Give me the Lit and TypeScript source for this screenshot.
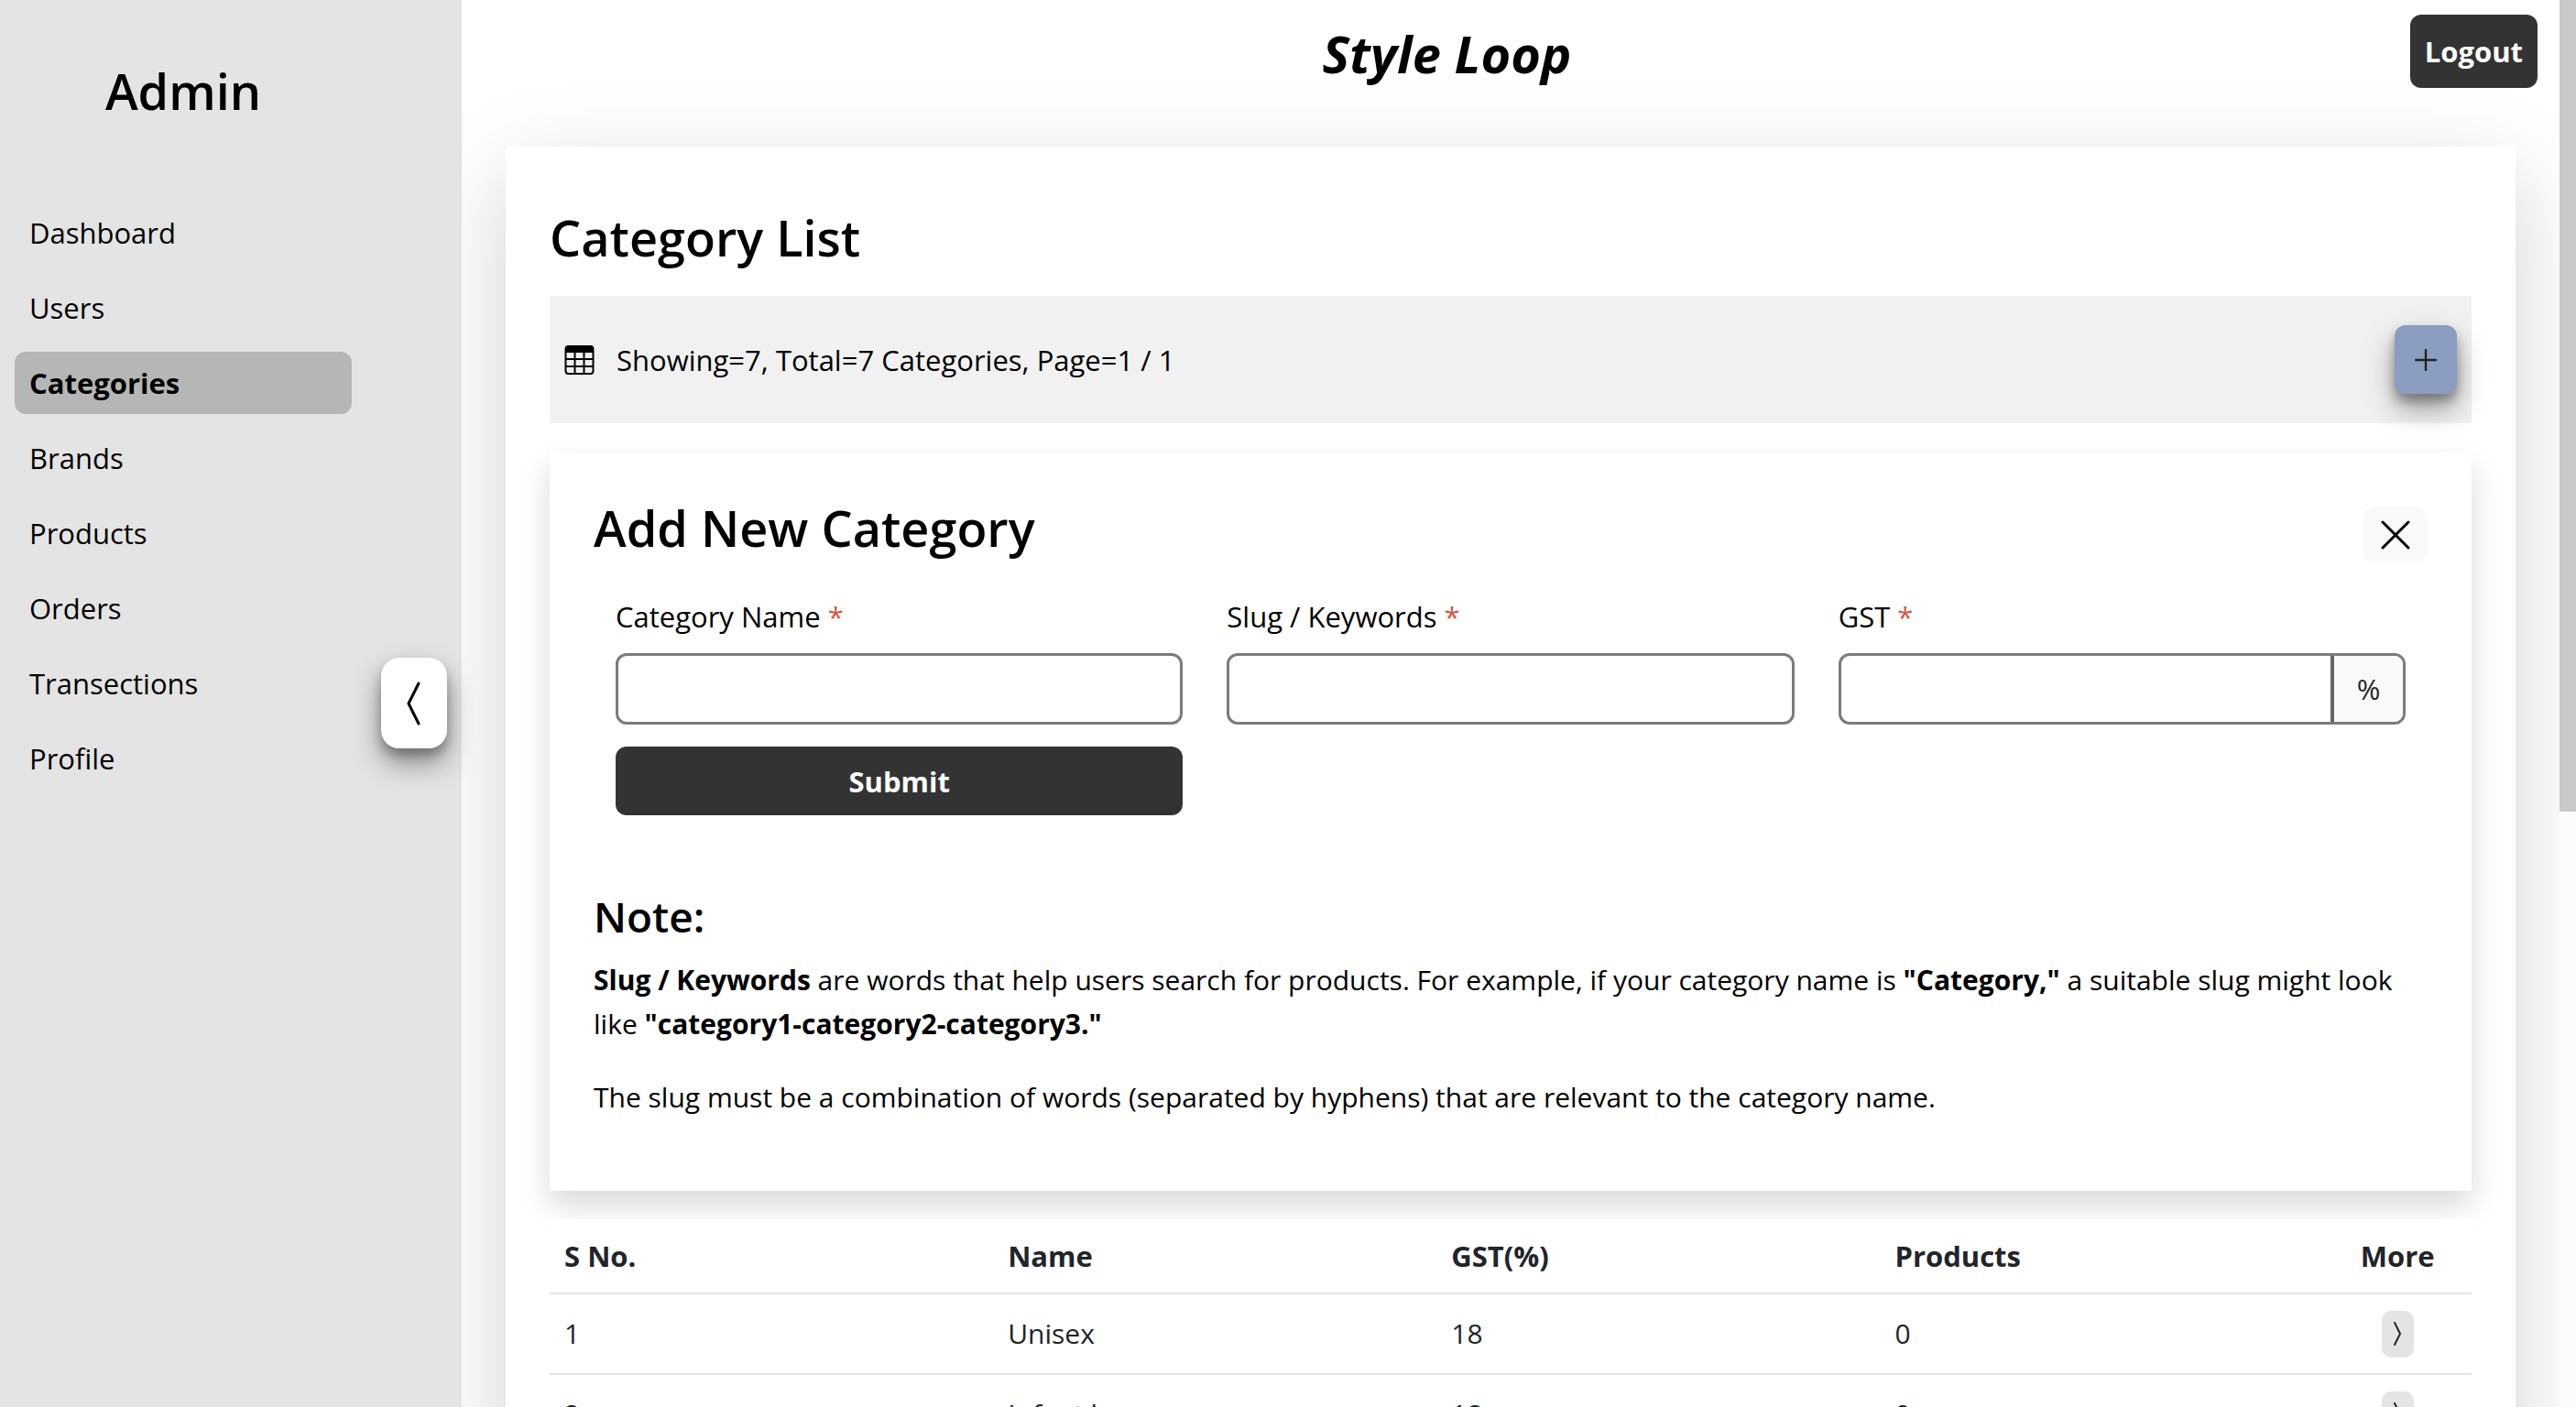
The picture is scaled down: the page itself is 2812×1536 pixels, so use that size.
import { LitElement, html, css, svg } from "lit";
import { customElement, state } from "lit/decorators.js";
import { classMap } from "lit/directives/class-map.js";

interface Category {
  id: number;
  name: string;
  gst: number;
  products: number;
}

const NAV = ["Dashboard", "Users", "Categories", "Brands", "Products", "Orders", "Transections", "Profile"];

const CATEGORIES: Category[] = [
  { id: 1, name: "Unisex", gst: 18, products: 0 },
  { id: 2, name: "Infant boys", gst: 18, products: 0 },
];

const tableIcon = svg`<path fill="currentColor" fill-rule="evenodd" d="M2 0a2 2 0 0 0-2 2v12a2 2 0 0 0 2 2h12a2 2 0 0 0 2-2V2a2 2 0 0 0-2-2zM15 4v3h-4V4zM15 8v3h-4V8zM15 12v2a1 1 0 0 1-1 1h-3v-3zM10 15H6v-3h4zM5 15H2a1 1 0 0 1-1-1v-2h4zM1 11V8h4v3zM1 7V4h4v3zM6 4h4v3H6zM10 8v3H6V8z"/>`;

@customElement("app-root")
export class AppRoot extends LitElement {
  @state() private current = "Categories";

  static styles = css`
    :host {
      display: block;
      font-family: "Segoe UI", "Open Sans", "Noto Sans", sans-serif;
      font-size: 31px;
      line-height: 48px;
      color: #000;
      background: #fff;
    }
    * { box-sizing: border-box; }
    h1, h2, h3, p { margin: 0; }
    button, input { font: inherit; color: inherit; margin: 0; border: 0; padding: 0; }
    button { cursor: pointer; display: flex; align-items: center; justify-content: center; }
    svg { display: block; }
    .shell { display: flex; height: 100vh; overflow: hidden; }
    .sidebar { flex: none; width: 504px; background: #e4e4e4; position: relative; z-index: 1; }
    .brand { width: 400px; padding-top: 65px; text-align: center; }
    .heading { font-size: 54px; line-height: 68px; font-weight: 600; }
    .nav { display: flex; flex-direction: column; gap: 14px; width: 400px; padding: 87px 16px 0; }
    .nav a { display: block; height: 68px; line-height: 68px; padding: 0 16px; border-radius: 12px; color: #000; text-decoration: none; }
    .nav a.active { background: #b5b7b6; font-weight: 700; }
    .toggle { position: absolute; right: 16px; top: 718px; width: 72px; height: 99px; border-radius: 20px; background: #fff; box-shadow: 0 16px 32px rgba(0, 0, 0, 0.4), 0 8px 12px rgba(0, 0, 0, 0.25); }
    .main { flex: 1; min-width: 0; overflow: hidden; }
    .topbar { display: flex; align-items: flex-start; padding: 16px 24px 0; height: 160px; }
    .logo { flex: 1; text-align: center; font-size: 56px; line-height: 68px; font-weight: 700; font-style: italic; padding-top: 8px; }
    .dark { background: #333; color: #fff; font-weight: 700; border-radius: 12px; }
    .logout { height: 80px; padding: 0 16px; }
    .page { margin: 0 48px; padding: 65px 48px 48px; background: #fff; box-shadow: 0 32px 96px rgba(0, 0, 0, 0.175); min-height: 100vh; }
    .summary { display: flex; align-items: center; gap: 24px; height: 139px; margin-top: 30px; padding: 0 16px; background: #f1f1f1; }
    .add { margin-left: auto; width: 68px; height: 75px; border-radius: 12px; background: #8b9dc0; color: #222; box-shadow: 0 16px 32px rgba(0, 0, 0, 0.35), 0 8px 12px rgba(0, 0, 0, 0.3); }
    .panel { margin-top: 32px; padding: 48px 48px 78px; background: #fff; box-shadow: 0 16px 32px rgba(0, 0, 0, 0.15); }
    .panel-head { display: flex; justify-content: space-between; align-items: flex-start; }
    .close { width: 71px; height: 60px; margin-top: 12px; border-radius: 12px; background: #f9f9f9; }
    .fields { display: grid; grid-template-columns: repeat(3, 1fr); column-gap: 48px; row-gap: 24px; padding: 35px 24px 0; }
    .field { display: flex; flex-direction: column; gap: 16px; }
    .req { color: #d6553f; }
    .box { display: flex; height: 78px; border: 3px solid #7b7b7b; border-radius: 12px; background: #fff; overflow: hidden; }
    .box input { flex: 1; min-width: 0; background: transparent; padding: 0 20px; outline: none; }
    .unit { width: 79px; border-left: 4px solid #666; background: #f9f9f9; color: #212529; display: flex; align-items: center; justify-content: center; }
    .submit { height: 75px; }
    .note { font-size: 46px; line-height: 56px; font-weight: 600; margin: 82px 0 18px; }
    .text { font-size: 30px; }
    .gap { margin-top: 32px; }
    .cats { width: 100%; margin-top: 31px; border-collapse: collapse; table-layout: fixed; background: #fff; position: relative; color: #212529; }
    .cats th, .cats td { text-align: left; padding: 0 16px; height: 88px; border-bottom: 2px solid #e3e4e5; }
    .cats td { font-size: 30px; }
    .cats th { height: 81px; font-weight: 700; }
    .cats .wide { width: 23.077%; }
    .cats .more { text-align: center; }
    .open { width: 35px; height: 51px; border-radius: 10px; background: #e4e4e4; margin: 0 auto; }
    .scroll { flex: none; width: 18px; background: #fcfcfc; position: relative; z-index: 1; }
    .thumb { height: 57.7%; background: #c9c9c9; }
  `;

  private field(id: string, label: string, unit = "") {
    return html`<div class="field">
      <label for=${id}>${label} <span class="req">*</span></label>
      <div class="box">
        <input id=${id} type="text" />${unit ? html`<span class="unit">${unit}</span>` : ""}
      </div>
    </div>`;
  }

  render() {
    return html`<div class="shell">
      <aside class="sidebar">
        <h2 class="brand heading">Admin</h2>
        <nav class="nav">
          ${NAV.map((n) => html`<a
            href="#${n.toLowerCase()}"
            class=${classMap({ active: n === this.current })}
            @click=${() => (this.current = n)}>${n}</a>`)}
        </nav>
        <button class="toggle" aria-label="Collapse menu">
          <svg width="20" height="50" viewBox="0 0 20 50"><path d="M15 3 4 25l11 22" fill="none" stroke="#000" stroke-width="3" stroke-linecap="round" stroke-linejoin="round"/></svg>
        </button>
      </aside>
      <main class="main">
        <header class="topbar">
          <h1 class="logo">Style Loop</h1>
          <button class="dark logout">Logout</button>
        </header>
        <section class="page">
          <h2 class="heading">Category List</h2>
          <div class="summary">
            <svg width="33" height="32" viewBox="0 0 16 16">${tableIcon}</svg>
            <span>Showing=7, Total=7 Categories, Page=1 / 1</span>
            <button class="add" aria-label="Add category">
              <svg width="24" height="24" viewBox="0 0 24 24"><path d="M12 1v22M1 12h22" stroke="currentColor" stroke-width="2.4" stroke-linecap="round"/></svg>
            </button>
          </div>
          <form class="panel" @submit=${(e: Event) => e.preventDefault()}>
            <div class="panel-head">
              <h2 class="heading">Add New Category</h2>
              <button type="button" class="close" aria-label="Close">
                <svg width="32" height="32" viewBox="0 0 32 32"><path d="m2 2 28 28M30 2 2 30" stroke="#000" stroke-width="3" stroke-linecap="round"/></svg>
              </button>
            </div>
            <div class="fields">
              ${this.field("name", "Category Name")} ${this.field("slug", "Slug / Keywords")} ${this.field("gst", "GST", "%")}
              <button class="dark submit">Submit</button>
            </div>
            <h3 class="note">Note:</h3>
            <p class="text"><b>Slug / Keywords</b> are words that help users search for products. For example, if your category name is <b>"Category,"</b> a suitable slug might look like <b>"category1-category2-category3."</b></p>
            <p class="text gap">The slug must be a combination of words (separated by hyphens) that are relevant to the category name.</p>
          </form>
          <table class="cats">
            <thead>
              <tr><th class="wide">S No.</th><th class="wide">Name</th><th class="wide">GST(%)</th><th class="wide">Products</th><th class="more">More</th></tr>
            </thead>
            <tbody>
              ${CATEGORIES.map((c) => html`<tr>
                <td>${c.id}</td><td>${c.name}</td><td>${c.gst}</td><td>${c.products}</td>
                <td class="more"><button class="open" aria-label="Open ${c.name}">
                  <svg width="10" height="28" viewBox="0 0 10 28"><path d="m2 2 6 12-6 12" fill="none" stroke="#212529" stroke-width="2" stroke-linecap="round" stroke-linejoin="round"/></svg>
                </button></td>
              </tr>`)}
            </tbody>
          </table>
        </section>
      </main>
      <div class="scroll"><div class="thumb"></div></div>
    </div>`;
  }
}
